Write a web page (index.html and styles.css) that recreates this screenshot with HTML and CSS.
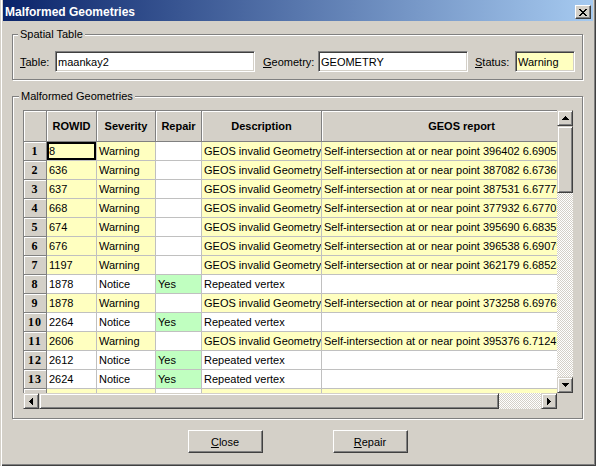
FILE: index.html
```html
<!DOCTYPE html>
<html lang="en">
<head>
    <meta charset="UTF-8">
    <title>Malformed Geometries</title>
    <link rel="stylesheet" href="styles.css">
</head>
<body>
    <div class="window">
        <div class="titlebar">
            <span class="title">Malformed Geometries</span>
            <button class="close-btn">
                <svg width="8" height="7" viewBox="0 0 8 7">
                    <path d="M0 0h2v1h-2zM6 0h2v1h-2zM1 1h2v1h-2zM5 1h2v1h-2zM2 2h4v1h-4zM3 3h2v1h-2zM2 4h4v1h-4zM1 5h2v1h-2zM5 5h2v1h-2zM0 6h2v1h-2zM6 6h2v1h-2z" fill="#000"/>
                </svg>
            </button>
        </div>
        <div class="content">
            <fieldset class="group spatial">
                <legend>Spatial Table</legend>
                <div class="fields">
                    <label class="lbl-table"><u>T</u>able:</label>
                    <input type="text" value="maankay2" readonly>
                    <label class="lbl-geom"><u>G</u>eometry:</label>
                    <input type="text" value="GEOMETRY" readonly>
                    <label class="lbl-status"><u>S</u>tatus:</label>
                    <input type="text" class="warn" value="Warning" readonly>
                </div>
            </fieldset>

            <fieldset class="group malformed">
                <legend>Malformed Geometries</legend>
                <div class="grid">
                    <div class="view">
                        <table>
                            <thead>
                                <tr>
                                    <th class="c-num"></th>
                                    <th class="c-id">ROWID</th>
                                    <th class="c-sev">Severity</th>
                                    <th class="c-rep">Repair</th>
                                    <th class="c-desc">Description</th>
                                    <th class="c-geos">GEOS report</th>
                                </tr>
                            </thead>
                            <tbody>
                                <tr class="warning"><th>1</th><td class="current">8</td><td>Warning</td><td class="rep"></td><td>GEOS invalid Geometry</td><td>Self-intersection at or near point 396402 6.69059e+06</td></tr>
                                <tr class="warning"><th>2</th><td>636</td><td>Warning</td><td class="rep"></td><td>GEOS invalid Geometry</td><td>Self-intersection at or near point 387082 6.67360e+06</td></tr>
                                <tr class="warning"><th>3</th><td>637</td><td>Warning</td><td class="rep"></td><td>GEOS invalid Geometry</td><td>Self-intersection at or near point 387531 6.67775e+06</td></tr>
                                <tr class="warning"><th>4</th><td>668</td><td>Warning</td><td class="rep"></td><td>GEOS invalid Geometry</td><td>Self-intersection at or near point 377932 6.67702e+06</td></tr>
                                <tr class="warning"><th>5</th><td>674</td><td>Warning</td><td class="rep"></td><td>GEOS invalid Geometry</td><td>Self-intersection at or near point 395690 6.68359e+06</td></tr>
                                <tr class="warning"><th>6</th><td>676</td><td>Warning</td><td class="rep"></td><td>GEOS invalid Geometry</td><td>Self-intersection at or near point 396538 6.69079e+06</td></tr>
                                <tr class="warning"><th>7</th><td>1197</td><td>Warning</td><td class="rep"></td><td>GEOS invalid Geometry</td><td>Self-intersection at or near point 362179 6.68523e+06</td></tr>
                                <tr class="notice"><th>8</th><td>1878</td><td>Notice</td><td class="rep yes">Yes</td><td>Repeated vertex</td><td></td></tr>
                                <tr class="warning"><th>9</th><td>1878</td><td>Warning</td><td class="rep"></td><td>GEOS invalid Geometry</td><td>Self-intersection at or near point 373258 6.69768e+06</td></tr>
                                <tr class="notice"><th>10</th><td>2264</td><td>Notice</td><td class="rep yes">Yes</td><td>Repeated vertex</td><td></td></tr>
                                <tr class="warning"><th>11</th><td>2606</td><td>Warning</td><td class="rep"></td><td>GEOS invalid Geometry</td><td>Self-intersection at or near point 395376 6.71249e+06</td></tr>
                                <tr class="notice"><th>12</th><td>2612</td><td>Notice</td><td class="rep yes">Yes</td><td>Repeated vertex</td><td></td></tr>
                                <tr class="notice"><th>13</th><td>2624</td><td>Notice</td><td class="rep yes">Yes</td><td>Repeated vertex</td><td></td></tr>
                                <tr class="warning"><th>14</th><td>2633</td><td>Warning</td><td class="rep"></td><td>GEOS invalid Geometry</td><td>Self-intersection at or near point 396012 6.69601e+06</td></tr>
                            </tbody>
                        </table>
                    </div>
                    <div class="vscroll">
                        <div class="sb-btn">
                            <svg width="7" height="4" viewBox="0 0 7 4"><path d="M3 0h1v1h-1zM2 1h3v1h-3zM1 2h5v1h-5zM0 3h7v1h-7z" fill="#000"/></svg>
                        </div>
                        <div class="thumb v-thumb"></div>
                        <div class="track"></div>
                        <div class="sb-btn">
                            <svg width="7" height="4" viewBox="0 0 7 4"><path d="M0 0h7v1h-7zM1 1h5v1h-5zM2 2h3v1h-3zM3 3h1v1h-1z" fill="#000"/></svg>
                        </div>
                    </div>
                    <div class="hscroll">
                        <div class="sb-btn">
                            <svg width="4" height="7" viewBox="0 0 4 7"><path d="M0 3h1v1h-1zM1 2h1v3h-1zM2 1h1v5h-1zM3 0h1v7h-1z" fill="#000"/></svg>
                        </div>
                        <div class="thumb h-thumb"></div>
                        <div class="track"></div>
                        <div class="sb-btn">
                            <svg width="4" height="7" viewBox="0 0 4 7"><path d="M0 0h1v7h-1zM1 1h1v5h-1zM2 2h1v3h-1zM3 3h1v1h-1z" fill="#000"/></svg>
                        </div>
                    </div>
                    <div class="corner"></div>
                </div>
            </fieldset>

            <div class="actions">
                <button class="btn"><u>C</u>lose</button>
                <button class="btn"><u>R</u>epair</button>
            </div>
        </div>
    </div>
</body>
</html>
```

FILE: styles.css
```css
* {
    box-sizing: border-box;
}
body {
    margin: 0;
    background-color: #d4d0c8;
    font-family: "Liberation Sans", Arial, sans-serif;
    font-size: 11px;
    color: #000;
}
.window {
    width: 596px;
    height: 466px;
    padding: 0 3px 3px 3px;
    background-color: #d4d0c8;
    box-shadow: inset 1px 0 #d4d0c8, inset 2px 0 #fff, inset -1px -1px #404040, inset -2px -2px #808080;
}
.titlebar {
    display: flex;
    align-items: center;
    justify-content: space-between;
    height: 21px;
    padding: 2px 2px 0 2px;
    background: linear-gradient(to right, #0a246a, #a6caf0);
}
.title {
    color: #fff;
    font-weight: bold;
    font-size: 12px;
}
.close-btn {
    display: flex;
    align-items: center;
    justify-content: center;
    width: 16px;
    height: 14px;
    margin-top: 1px;
    padding: 0;
    background-color: #d4d0c8;
    border: 1px solid;
    border-color: #fff #404040 #404040 #fff;
    box-shadow: inset -1px -1px #808080;
}
.content {
    padding: 7px 10px 0 9px;
}
.group {
    margin: 0;
    min-width: 0;
    border: 1px solid #808080;
    box-shadow: inset 1px 1px #fff, 1px 1px #fff;
}
.group legend {
    padding: 0 2px;
    line-height: 13px;
    background-color: #d4d0c8;
}
.spatial {
    padding: 10px 7px 7px 7px;
}
.spatial legend {
    margin-left: -2px;
}
.fields {
    display: grid;
    grid-template-columns: 35px 200px 63px 150px 47px 60px;
    align-items: center;
}
.lbl-geom {
    padding-left: 8px;
}
.lbl-status {
    padding-left: 7px;
}
input {
    height: 21px;
    width: 100%;
    margin: 0;
    padding: 0 2px;
    font-family: inherit;
    font-size: 11px;
    background-color: #fff;
    border: 1px solid;
    border-color: #808080 #fff #fff #808080;
    box-shadow: inset 1px 1px #404040, inset -1px -1px #d4d0c8;
    outline: none;
}
input.warn {
    background-color: #ffffc0;
}
.malformed {
    margin-top: 10px;
    padding: 7px 9px 9px 10px;
}
.malformed legend {
    margin-left: -4px;
}

/* grid */
.grid {
    display: grid;
    grid-template-columns: 534px 16px;
    grid-template-rows: 283px 16px;
}
.view {
    overflow: hidden;
    background-color: #808080;
}
table {
    border-collapse: separate;
    border-spacing: 0;
    table-layout: fixed;
    width: 579px;
}
th, td {
    padding: 0 2px;
    white-space: nowrap;
    overflow: hidden;
    line-height: 18px;
    text-align: left;
    font-weight: normal;
    border-right: 1px solid #c0c0c0;
    border-bottom: 1px solid #c0c0c0;
    background-color: #fff;
}
thead th {
    line-height: 30px;
    text-align: center;
    font-weight: bold;
    background-color: #d4d0c8;
    border-top: 1px solid #808080;
    border-right-color: #808080;
    border-bottom-color: #808080;
    box-shadow: inset 1px 1px #fff;
}
.c-num { width: 24px; }
.c-id { width: 50px; }
.c-sev { width: 59px; }
.c-rep { width: 46px; }
.c-desc { width: 120px; }
.c-geos { width: 280px; }
th.c-num, tbody th {
    border-left: 1px solid #808080;
}
tbody th {
    text-align: center;
    padding: 0;
    font-family: "Liberation Serif", "Times New Roman", serif;
    font-weight: bold;
    font-size: 12px;
    letter-spacing: 1px;
    background-color: #d4d0c8;
    border-right-color: #808080;
    border-bottom-color: #808080;
    box-shadow: inset 1px 1px #fff;
}
.warning td {
    background-color: #ffffc0;
}
.warning td.rep {
    background-color: #fff;
}
td.yes {
    background-color: #c0ffc0;
}
td.current {
    box-shadow: inset 0 0 0 2px #000;
}

/* scrollbars */
.vscroll, .hscroll {
    display: flex;
}
.vscroll {
    flex-direction: column;
}
.sb-btn, .thumb {
    display: flex;
    align-items: center;
    justify-content: center;
    flex: none;
    width: 16px;
    height: 16px;
    background-color: #d4d0c8;
    border: 1px solid;
    border-color: #d4d0c8 #404040 #404040 #d4d0c8;
    box-shadow: inset 1px 1px #fff, inset -1px -1px #808080;
}
.v-thumb {
    height: 67px;
}
.h-thumb {
    width: 460px;
}
.track {
    flex: 1;
    background: repeating-conic-gradient(#fff 0 25%, #d4d0c8 0 50%) 0 0 / 2px 2px;
}
.corner {
    background-color: #d4d0c8;
}

.actions {
    display: flex;
    justify-content: center;
    gap: 70px;
    margin-top: 11px;
}
.btn {
    width: 75px;
    height: 23px;
    padding: 0;
    font-family: inherit;
    font-size: 11px;
    background-color: #d4d0c8;
    border: 1px solid;
    border-color: #fff #404040 #404040 #fff;
    box-shadow: inset -1px -1px #808080;
}
```
